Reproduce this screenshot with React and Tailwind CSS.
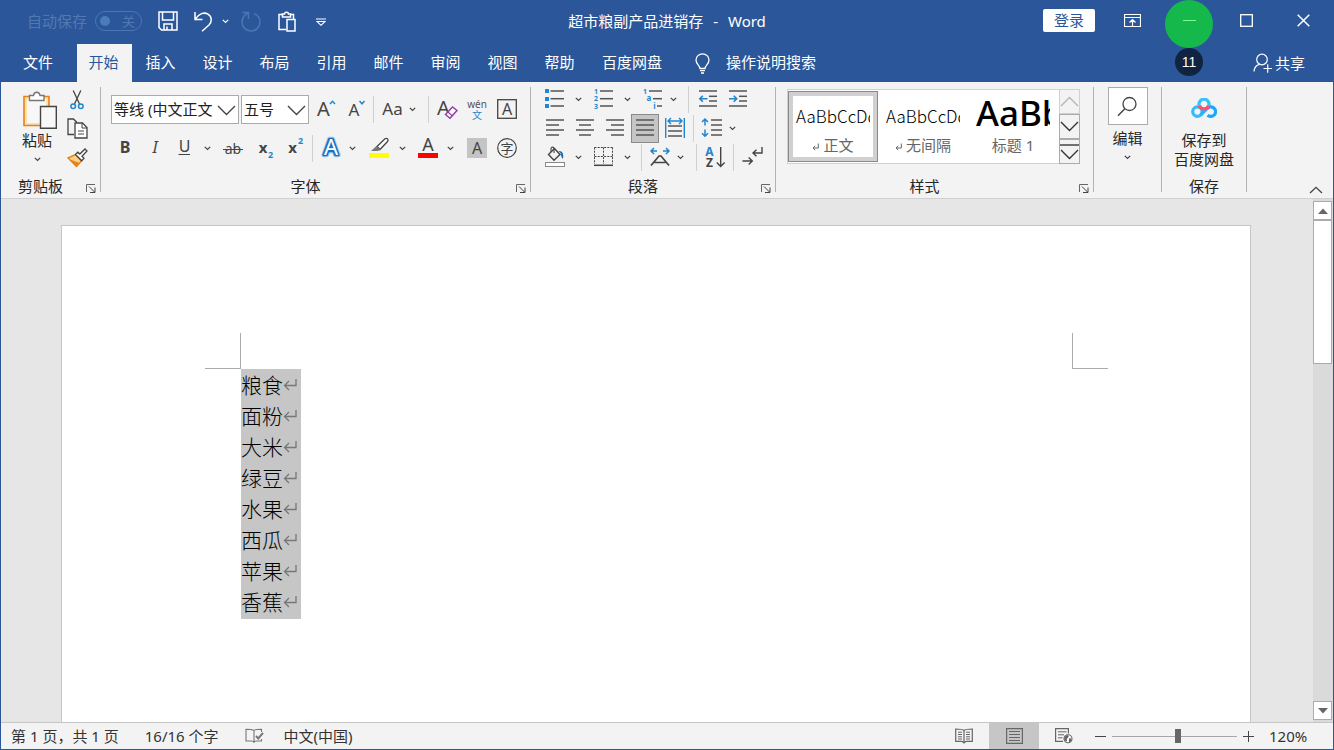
import React from "react";

const BLUE = "#1f86cf";
const INK = "#444444";

/* ---------- shared pieces ---------- */

function Icon({ w = 30, h = 29, children, className = "" }) {
  return (
    <svg
      width={w}
      height={h}
      viewBox={`0 0 ${w} ${h}`}
      fill="none"
      aria-hidden="true"
      className={`shrink-0 ${className}`}
    >
      {children}
    </svg>
  );
}

function Tool({ label, className = "", children }) {
  return (
    <button type="button" aria-label={label} title={label} className={`flex h-[29px] shrink-0 items-center justify-center ${className}`}>
      {children}
    </button>
  );
}

function Chevron({ label, className = "" }) {
  return (
    <Tool label={label} className={`w-[14px] ${className}`}>
      <Icon w={7} h={5}>
        <path d="M.8 .8 3.5 3.5 6.2 .8" stroke={INK} strokeWidth="1.2" />
      </Icon>
    </Tool>
  );
}

function Sep({ className = "" }) {
  return <div className={`h-[27px] w-px shrink-0 bg-[#d0d0d0] ${className}`} />;
}

function Divider() {
  return <div className="mt-[5px] mb-[6px] w-px shrink-0 bg-[#b4b4b4]" />;
}

function Group({ label, launcher = true, className = "", children }) {
  return (
    <section aria-label={label} className={`flex shrink-0 flex-col justify-between pb-0.5 ${className}`}>
      {children}
      <div className="flex h-5 items-center leading-5">
        <span className="flex-1 text-center">{label}</span>
        {launcher && (
          <button type="button" aria-label={`${label}设置`} className="flex w-5 justify-center pt-1 pl-0.5">
            <Icon w={10} h={9}>
              <path d="M.5 8V.5H9" stroke="#666" />
              <path d="M3 2.5 8.5 8M9 3.5V8.5H4" stroke="#444" />
            </Icon>
          </button>
        )}
      </div>
    </section>
  );
}

function Lines({ rows }) {
  return rows.map(([x1, x2, y], i) => (
    <path key={i} d={`M${x1} ${y}H${x2}`} stroke="#555" strokeWidth="1.5" />
  ));
}

function Glyph({ x, y, size, fill = INK, bold, italic, anchor = "middle", children }) {
  return (
    <text x={x} y={y} fontSize={size} fill={fill} fontWeight={bold ? 700 : 400} fontStyle={italic ? "italic" : "normal"} textAnchor={anchor}>
      {children}
    </text>
  );
}

/* ---------- title bar ---------- */

function TitleBar() {
  return (
    <header className="grid h-11 shrink-0 grid-cols-[1fr_auto_1fr] text-white">
      <div className="flex h-[42px] items-center pl-[26px]">
        <label htmlFor="autosave" className="text-[#5079b3]">自动保存</label>
        <button
          id="autosave"
          type="button"
          role="switch"
          aria-checked="false"
          className="ml-2 flex h-5 w-[47px] items-center justify-between rounded-full border border-[#4a76b3] pr-[6px] pl-1 text-[13px] text-[#5079b3]"
        >
          <span className="h-[10px] w-[10px] rounded-full bg-[#4a7cbb]" />
          关
        </button>
        <button type="button" aria-label="保存" className="ml-4">
          <Icon w={20} h={20}>
            <path d="M1 1H19V19H3.5L1 16.5ZM4.5 1V9H15.5V1M6 19V13H14V19M9 15.5V19" stroke="#fff" strokeWidth="1.5" />
          </Icon>
        </button>
        <button type="button" aria-label="撤消" className="ml-[15px]">
          <Icon w={20} h={21}>
            <path d="M2 1V8.5H9.5M2.3 8.2C6 2.5 11 .8 15 3.2C19.3 6 19 11 16 14L9 20.3" stroke="#fff" strokeWidth="1.5" />
          </Icon>
        </button>
        <button type="button" aria-label="撤消列表" className="ml-[9px]">
          <Icon w={7} h={5}>
            <path d="M.8 .8 3.5 3.5 6.2 .8" stroke="#fff" strokeWidth="1.2" />
          </Icon>
        </button>
        <button type="button" aria-label="重复" className="ml-3">
          <Icon w={20} h={21}>
            <path d="M1.5 1.5H7.5V8M7.2 2C3 4 1 7.2 1 11A9 9 0 0 0 19 11C19 7 16.5 4 13 2.6" stroke="#4a76b3" strokeWidth="1.5" />
          </Icon>
        </button>
        <button type="button" aria-label="粘贴" className="ml-[17px]">
          <Icon w={18} h={21}>
            <path d="M8 18.5H1V3.5H4M13 3.5H15.5V8M4.5 6V3H6.5C6.5 .5 10.5 .5 10.5 3H12.5V6Z" stroke="#fff" strokeWidth="1.5" />
            <path d="M9 8.5H17V20H9Z" stroke="#fff" strokeWidth="1.5" />
          </Icon>
        </button>
        <button type="button" aria-label="自定义快速访问工具栏" className="ml-5 pt-0.5">
          <Icon w={10} h={8}>
            <path d="M0 1H10M1 3.5H9L5 7.3Z" stroke="#fff" strokeWidth="1.1" />
          </Icon>
        </button>
      </div>
      <h1 className="flex h-[42px] items-center gap-[10px]">
        <span>超市粮副产品进销存</span>
        <span>-</span>
        <span>Word</span>
      </h1>
      <div className="flex h-10 items-center justify-end pr-px">
        <button type="button" className="mr-[9px] h-[23px] w-[52px] rounded-xs bg-white text-[#2b579a]">登录</button>
        <button type="button" aria-label="功能区显示选项" className="flex w-[57px] justify-center">
          <Icon w={17} h={13}>
            <path d="M.5 .5H16.5V12.5H.5ZM.5 3.5H16.5M8.5 12V6M5.5 8.5 8.5 5.5 11.5 8.5" stroke="#fff" strokeWidth="1.2" />
          </Icon>
        </button>
        <button type="button" aria-label="最小化" className="relative flex h-10 w-[57px] items-center justify-center">
          <span className="absolute top-0 left-1 h-12 w-12 rounded-full bg-[#14b84b]" />
          <span className="relative h-px w-[13px] bg-[#7dff8c]" />
          <span className="absolute top-12 left-[14px] flex h-7 w-7 items-center justify-center rounded-full bg-[#12233f] font-[Liberation_Sans] text-sm">11</span>
        </button>
        <button type="button" aria-label="最大化" className="flex w-[57px] justify-center">
          <Icon w={13} h={13}>
            <rect x=".7" y=".7" width="11.6" height="11.6" stroke="#fff" strokeWidth="1.3" />
          </Icon>
        </button>
        <button type="button" aria-label="关闭" className="flex w-[57px] justify-center">
          <Icon w={13} h={13}>
            <path d="M.7 .7 12.3 12.3M12.3 .7 .7 12.3" stroke="#fff" strokeWidth="1.5" />
          </Icon>
        </button>
      </div>
    </header>
  );
}

const TABS = ["插入", "设计", "布局", "引用", "邮件", "审阅", "视图", "帮助"];

function TabBar() {
  return (
    <nav className="flex h-[38px] shrink-0 items-stretch text-white">
      <button type="button" className="w-[76px] pr-0.5 pb-0.5">文件</button>
      <button type="button" aria-current="true" className="w-[55px] bg-[#f3f3f3] pr-0.5 pb-0.5 text-[#2b579a]">开始</button>
      {TABS.map((t) => (
        <button key={t} type="button" className="w-[57px] pb-0.5">{t}</button>
      ))}
      <button type="button" className="w-[88px] pb-0.5">百度网盘</button>
      <label htmlFor="tellme" className="ml-[19px] flex items-center">
        <Icon w={15} h={21}>
          <path d="M5 15.5C5 12.5 1 11.5 1 7A6.5 6.2 0 0 1 14 7C14 11.5 10 12.5 10 15.5ZM5 17.7H10M6 20H9" stroke="#fff" strokeWidth="1.3" />
        </Icon>
      </label>
      <input id="tellme" type="text" aria-label="操作说明搜索" placeholder="操作说明搜索" className="ml-4 w-[120px] bg-transparent pb-0.5 outline-none placeholder:text-white" />
      <button type="button" className="mr-7 ml-auto flex items-center gap-0.5">
        <Icon w={20} h={20}>
          <circle cx="9" cy="6.5" r="5.3" stroke="#fff" strokeWidth="1.2" />
          <path d="M1 18.5C1.3 14.5 3.5 12 6.5 11.3M10.5 15.5H19M14.7 11.3V19.7" stroke="#fff" strokeWidth="1.2" />
        </Icon>
        共享
      </button>
    </nav>
  );
}

/* ---------- ribbon ---------- */

function ClipboardGroup() {
  return (
    <Group label="剪贴板" className="w-[99px]">
      <div className="flex pt-[3px] pl-[9px]">
        <button type="button" className="flex w-[54px] flex-col items-center pt-[6px]">
          <Icon w={40} h={38}>
            <path d="M7 5.5H32V34.5H7Z" fill="#fbe3ae" stroke="#e8811a" strokeWidth="1.6" />
            <path d="M10 8H29V32H10Z" fill="#f7f7f7" />
            <path d="M12.5 9.5V4.5H16.5C17 .2 22.5 .2 23 4.5H27V9.5Z" fill="#fff" stroke="#777" strokeWidth="1.4" />
            <path d="M23.5 15.5H39.3V37.2H23.5Z" fill="#f7f7f7" stroke="#444" strokeWidth="1.4" />
          </Icon>
          <span className="leading-[22px]">粘贴</span>
          <Icon w={7} h={5} className="mt-[6px]">
            <path d="M.8 .8 3.5 3.5 6.2 .8" stroke={INK} strokeWidth="1.2" />
          </Icon>
        </button>
        <div className="flex w-[26px] flex-col">
          <Tool label="剪切">
            <Icon w={14} h={20}>
              <path d="M3.2 .5 9.5 14M10.8 .5 4.5 14" stroke="#444" strokeWidth="1.3" />
              <circle cx="3.2" cy="16.3" r="2.3" stroke={BLUE} strokeWidth="1.5" />
              <circle cx="10.8" cy="16.3" r="2.3" stroke={BLUE} strokeWidth="1.5" />
            </Icon>
          </Tool>
          <Tool label="复制">
            <Icon w={21} h={21}>
              <path d="M7 16.5H1V1H6.5L10 4.5" stroke="#444" strokeWidth="1.3" />
              <path d="M8 5H15.5L20 9.5V20H8Z" fill="#fff" stroke="#444" strokeWidth="1.3" />
              <path d="M15 5V10H20M11 13H17M11 16H17" stroke="#444" />
            </Icon>
          </Tool>
          <Tool label="格式刷">
            <Icon w={21} h={20}>
              <path d="M1 10 8.5 6.5 14.5 13 9.5 18.5Z" fill="#fbd48a" stroke="#e8811a" strokeWidth="1.4" />
              <path d="M3 11.5 12.5 15 9.5 18.5Z" fill="#e8811a" />
              <path d="M8.5 6.5 10.8 4.2 12.8 6 18 1 20 3 15 8.2 17 10.3 14.7 12.7Z" fill="#fff" stroke="#444" strokeWidth="1.3" />
            </Icon>
          </Tool>
        </div>
      </div>
    </Group>
  );
}

function Combo({ id, label, value, className }) {
  return (
    <div className={`relative ${className}`}>
      <select id={id} aria-label={label} className="h-[29px] w-full appearance-none overflow-hidden border border-[#ababab] bg-white pr-[25px] pb-0.5 pl-0.5 text-[#222] outline-none">
        <option>{value}</option>
      </select>
      <Icon w={19} h={11} className="pointer-events-none absolute top-[10px] right-[3px]">
        <path d="M1 1 9.5 9.5 18 1" stroke="#444" strokeWidth="1.4" />
      </Icon>
    </div>
  );
}

function FontGroup() {
  return (
    <Group label="字体" className="w-[429px]">
      <div className="flex flex-col gap-[10px] pt-[13px]">
        <div className="flex items-center pl-[10px]">
          <Combo id="font-name" label="字体名称" value="等线 (中文正文)" className="mr-0.5 w-[128px]" />
          <Combo id="font-size" label="字号" value="五号" className="mr-0.5 w-[68px]" />
          <Tool label="增大字号">
            <Icon>
              <Glyph x={12.5} y={20.5} size={20}>A</Glyph>
              <path d="M19 9 21.5 6.3 24 9" stroke={BLUE} strokeWidth="1.5" />
            </Icon>
          </Tool>
          <Tool label="减小字号">
            <Icon>
              <Glyph x={13} y={20.5} size={17}>A</Glyph>
              <path d="M18.5 6 21 8.8 23.5 6" stroke={BLUE} strokeWidth="1.5" />
            </Icon>
          </Tool>
          <Sep className="ml-0.5" />
          <Tool label="更改大小写" className="ml-1">
            <Icon>
              <Glyph x={14.5} y={20} size={17}>Aa</Glyph>
            </Icon>
          </Tool>
          <Chevron label="更改大小写选项" className="-ml-[3px]" />
          <Sep className="ml-[9px]" />
          <Tool label="清除所有格式" className="ml-[3px]">
            <Icon>
              <Glyph x={11.5} y={20} size={20}>A</Glyph>
              <path d="M13.5 19.5 20.5 12 25 15.5 18 23.3Z" fill="#fff" stroke="#9440a8" strokeWidth="1.5" />
              <path d="M15.8 17 20.3 20.8" stroke="#9440a8" strokeWidth="1.3" />
            </Icon>
          </Tool>
          <Tool label="拼音指南" className="w-[30px]">
            <span className="flex flex-col items-center">
              <span className="text-[10px] leading-[11px] text-[#555]">wén</span>
              <span className="text-[10px] leading-[11px] text-[#1f86cf]">文</span>
            </span>
          </Tool>
          <Tool label="字符边框">
            <Icon>
              <rect x="5.7" y="4.7" width="18.6" height="18.6" stroke="#444" strokeWidth="1.3" />
              <Glyph x={15} y={20} size={16}>A</Glyph>
            </Icon>
          </Tool>
        </div>
        <div className="flex items-center pl-[9px]">
          <Tool label="加粗">
            <Icon><Glyph x={15} y={18.5} size={16} bold>B</Glyph></Icon>
          </Tool>
          <Tool label="倾斜">
            <Icon><Glyph x={15} y={18.5} size={16} italic>I</Glyph></Icon>
          </Tool>
          <Tool label="下划线">
            <Icon>
              <Glyph x={14.5} y={18} size={16}>U</Glyph>
              <path d="M8.5 20.5H20" stroke={INK} />
            </Icon>
          </Tool>
          <Chevron label="下划线选项" />
          <Tool label="删除线" className="ml-1">
            <Icon>
              <Glyph x={15} y={19.5} size={14}>ab</Glyph>
              <path d="M5 15.5H25" stroke={INK} />
            </Icon>
          </Tool>
          <Tool label="下标" className="ml-0.5">
            <Icon>
              <Glyph x={13} y={18.5} size={15} bold>x</Glyph>
              <Glyph x={20.5} y={23.5} size={9} bold fill={BLUE}>2</Glyph>
            </Icon>
          </Tool>
          <Tool label="上标">
            <Icon>
              <Glyph x={12.5} y={18.5} size={15} bold>x</Glyph>
              <Glyph x={20.5} y={10} size={9} bold fill={BLUE}>2</Glyph>
            </Icon>
          </Tool>
          <Sep className="ml-0.5" />
          <Tool label="文本效果" className="ml-1">
            <Icon w={28}>
              <g strokeLinejoin="round">
                <text x="14" y="21" fontSize="22" fontWeight="600" textAnchor="middle" fill="#a8cfee" stroke="#a8cfee" strokeWidth="4.5">A</text>
                <text x="14" y="21" fontSize="22" fontWeight="600" textAnchor="middle" fill="#1a6fc4" stroke="#1a6fc4" strokeWidth="2.5">A</text>
                <text x="14" y="21" fontSize="22" fontWeight="400" textAnchor="middle" fill="#fff">A</text>
              </g>
            </Icon>
          </Tool>
          <Chevron label="文本效果选项" />
          <Tool label="文本突出显示颜色" className="ml-[6px]">
            <Icon>
              <path d="M12 12.5 20 4.8C22 3.5 24 5.5 22.5 7.5L15 15.5Z" fill="#fff" stroke="#444" strokeWidth="1.3" />
              <path d="M6 17 11.5 12 15.5 15.8 13 17Z" fill="#777" />
              <rect x="4" y="19" width="20" height="5" fill="#ffff00" />
            </Icon>
          </Tool>
          <Chevron label="突出显示颜色选项" />
          <Tool label="字体颜色" className="ml-1">
            <Icon>
              <Glyph x={15} y={17} size={18}>A</Glyph>
              <rect x="5" y="19" width="20" height="5" fill="#ff0000" />
            </Icon>
          </Tool>
          <Chevron label="字体颜色选项" />
          <Tool label="字符底纹" className="ml-[5px]">
            <Icon>
              <rect x="5" y="4" width="20" height="20" fill="#c4c4c4" />
              <Glyph x={15} y={20} size={16}>A</Glyph>
            </Icon>
          </Tool>
          <Tool label="带圈字符">
            <Icon>
              <circle cx="15" cy="14" r="9.3" stroke="#444" strokeWidth="1.2" />
              <Glyph x={15} y={19} size={13}>字</Glyph>
            </Icon>
          </Tool>
        </div>
      </div>
    </Group>
  );
}

function ParagraphGroup() {
  return (
    <Group label="段落" className="w-[244px]">
      <div className="flex flex-col pt-[3px] pl-[9px]">
        <div className="flex items-center">
          <Tool label="项目符号">
            <Icon>
              <path d="M5 4H9V8H5ZM5 12H9V16H5ZM5 19H9V23H5Z" fill={BLUE} />
              <Lines rows={[[10.5, 24, 6], [10.5, 24, 13.7], [10.5, 24, 21]]} />
            </Icon>
          </Tool>
          <Chevron label="项目符号选项" className="ml-px" />
          <Tool label="编号" className="ml-[3px]">
            <Icon>
              <Glyph x={8} y={8.5} size={7} bold fill={BLUE}>1</Glyph>
              <Glyph x={8} y={16} size={7} bold fill={BLUE}>2</Glyph>
              <Glyph x={8} y={23.7} size={7} bold fill={BLUE}>3</Glyph>
              <Lines rows={[[12, 25, 6], [12, 25, 13.7], [12, 25, 21]]} />
            </Icon>
          </Tool>
          <Chevron label="编号选项" className="ml-0.5" />
          <Tool label="多级列表" className="ml-1">
            <Icon>
              <Glyph x={7} y={8.5} size={7} bold fill={BLUE}>1</Glyph>
              <Glyph x={11} y={16} size={8} bold fill={BLUE}>a</Glyph>
              <Glyph x={16.5} y={23.7} size={8} bold fill={BLUE}>i</Glyph>
              <Lines rows={[[11, 24, 6], [15, 24, 13.7], [19, 24, 21]]} />
            </Icon>
          </Tool>
          <Chevron label="多级列表选项" className="-ml-0.5" />
          <Sep className="ml-2" />
          <Tool label="减少缩进量" className="ml-1">
            <Icon>
              <Lines rows={[[6, 24, 6], [16, 24, 11.3], [16, 24, 16], [6, 24, 21]]} />
              <path d="M14.5 13.7H7M9.8 10.7 6.8 13.7 9.8 16.7" stroke={BLUE} strokeWidth="1.6" />
            </Icon>
          </Tool>
          <Tool label="增加缩进量">
            <Icon>
              <Lines rows={[[6, 24, 6], [16, 24, 11.3], [16, 24, 16], [6, 24, 21]]} />
              <path d="M6 13.7H13.5M10.7 10.7 13.7 13.7 10.7 16.7" stroke={BLUE} strokeWidth="1.6" />
            </Icon>
          </Tool>
        </div>
        <div className="flex items-center">
          <Tool label="左对齐">
            <Icon><Lines rows={[[6, 24, 6], [6, 19, 11], [6, 24, 16], [6, 19, 21]]} /></Icon>
          </Tool>
          <Tool label="居中">
            <Icon><Lines rows={[[6, 24, 6], [9, 21, 11], [6, 24, 16], [9, 21, 21]]} /></Icon>
          </Tool>
          <Tool label="右对齐">
            <Icon><Lines rows={[[6, 24, 6], [11, 24, 11], [6, 24, 16], [11, 24, 21]]} /></Icon>
          </Tool>
          <Tool label="两端对齐" className="mx-px w-7 border border-[#8a8a8a] bg-[#c5c5c5]">
            <Icon w={26} h={27}><Lines rows={[[4, 22, 5], [4, 22, 10], [4, 22, 15], [4, 22, 20]]} /></Icon>
          </Tool>
          <Tool label="分散对齐">
            <Icon>
              <path d="M5.7 4V24M24.3 4V24M8 7H22M11 4 8 7 11 10M19 4 22 7 19 10" stroke={BLUE} strokeWidth="1.4" />
              <Lines rows={[[8, 22, 12], [8, 22, 17], [8, 22, 22]]} />
            </Icon>
          </Tool>
          <Sep className="ml-[3px]" />
          <Tool label="行和段落间距" className="ml-[3px]">
            <Icon>
              <Lines rows={[[14, 25, 6], [14, 25, 11], [14, 25, 16], [14, 25, 21]]} />
              <path d="M8 11.5V5M5 8 8 5 11 8M8 15.5V22M5 19.3 8 22.3 11 19.3" stroke={BLUE} strokeWidth="1.5" />
            </Icon>
          </Tool>
          <Chevron label="行距选项" className="-ml-0.5" />
        </div>
        <div className="flex items-center">
          <Tool label="底纹">
            <Icon>
              <rect x="5.5" y="19.5" width="19" height="4" fill="#fff" stroke="#888" />
              <path d="M8.5 11.5 14.5 5.5 20 11.5 14 17.3Z" stroke="#444" strokeWidth="1.4" />
              <path d="M11 9V6C11 3.5 14 3.5 14 6V10" stroke="#444" strokeWidth="1.1" />
              <path d="M18.5 8C22.5 7.5 24 11 23 16C21.5 14.5 20.5 12 20.8 10.5Z" fill="#1a6fb4" />
            </Icon>
          </Tool>
          <Chevron label="底纹选项" className="ml-px" />
          <Tool label="边框" className="ml-[3px]">
            <Icon>
              <path d="M6.5 4.5H24.5M6.5 13.5H24.5M6.5 4.5V21M15.5 4.5V21M24.5 4.5V21" stroke="#444" strokeDasharray="2 1.2" />
              <path d="M6 22.3H25" stroke="#444" strokeWidth="1.5" />
            </Icon>
          </Tool>
          <Chevron label="边框选项" className="ml-0.5" />
          <Sep className="ml-[7px]" />
          <Tool label="中文版式" className="ml-[3px]">
            <Icon>
              <path d="M12 8H6.5M9 5 6 8 9 11M18 8H23.5M21 5 24 8 21 11" stroke={BLUE} strokeWidth="1.5" />
              <path d="M6 22.5 14 13H16L24 22.5M9.5 19.5H20.5" stroke="#444" strokeWidth="1.7" />
            </Icon>
          </Tool>
          <Chevron label="中文版式选项" className="-ml-0.5" />
          <Sep className="ml-[9px]" />
          <Tool label="排序" className="ml-0.5">
            <Icon>
              <Glyph x={10.5} y={12.5} size={12} bold fill={BLUE}>A</Glyph>
              <Glyph x={10.5} y={24} size={12} bold>Z</Glyph>
              <path d="M21.7 4V23.3M17.8 19.5 21.7 23.5 25.6 19.5" stroke="#444" strokeWidth="1.4" />
            </Icon>
          </Tool>
          <Sep className="ml-1" />
          <Tool label="显示编辑标记" className="ml-1">
            <Icon>
              <path d="M24 4V10H15.5M18.5 6.7 15 10 18.5 13.3M4.5 18H14M10.7 14.5 14.3 18 10.7 21.5" stroke="#444" strokeWidth="1.4" />
            </Icon>
          </Tool>
        </div>
      </div>
    </Group>
  );
}

function StyleName({ mark, children }) {
  return (
    <span className="flex items-center justify-center gap-1 leading-5 text-[#666]">
      {mark && (
        <Icon w={7} h={8} className="mt-1">
          <path d="M6.3 .5V5H1M3.2 2.8 1 5 3.2 7.2" stroke="#666" />
        </Icon>
      )}
      {children}
    </span>
  );
}

function BodyPreview() {
  return (
    <span className="w-full overflow-hidden text-left font-['Noto_Sans_CJK_SC'] text-[17px] leading-[38px] font-light whitespace-nowrap text-black">
      AaBbCcDdE
    </span>
  );
}

function StylesGroup() {
  return (
    <Group label="样式" className="w-[317px]">
      <div className="pt-[7px] pl-[11px]">
        <div className="flex h-[75px] w-[293px] border border-[#d0d0d0] bg-white">
          <button type="button" aria-pressed="true" className="my-px flex w-[90px] flex-col justify-end border border-[#8a8a8a] bg-[#d2d0ce] p-1">
            <span className="flex w-full flex-1 flex-col justify-end bg-white px-[3px] pb-0.5">
              <BodyPreview />
              <StyleName mark>正文</StyleName>
            </span>
          </button>
          <button type="button" className="flex w-[90px] flex-col justify-end px-2 pb-2">
            <BodyPreview />
            <span className="w-full"><StyleName mark>无间隔</StyleName></span>
          </button>
          <button type="button" className="flex w-[90px] flex-col justify-end px-2 pb-2">
            <span className="w-full overflow-hidden text-left text-[35px] leading-[44px] font-medium whitespace-nowrap text-black">AaBb</span>
            <span className="w-full"><StyleName>标题 1</StyleName></span>
          </button>
          <div className="-my-px -mr-px ml-auto flex w-[21px] flex-col">
            <button type="button" aria-label="上一行" className="flex flex-1 items-center justify-center border border-[#d0d0d0] bg-[#f3f3f3]">
              <Icon w={19} h={11}><path d="M1 10 9.5 1.5 18 10" stroke="#b4b4b4" strokeWidth="1.3" /></Icon>
            </button>
            <button type="button" aria-label="下一行" className="flex flex-1 items-center justify-center border border-[#ababab] bg-[#f3f3f3]">
              <Icon w={19} h={11}><path d="M1 1 9.5 9.5 18 1" stroke="#333" strokeWidth="1.4" /></Icon>
            </button>
            <button type="button" aria-label="更多样式" className="flex flex-1 items-center justify-center border border-[#ababab] bg-[#f3f3f3]">
              <Icon w={19} h={19}><path d="M0 3H19" stroke="#444" strokeWidth="1.5" /><path d="M1 8 9.5 16.5 18 8" stroke="#333" strokeWidth="1.4" /></Icon>
            </button>
          </div>
        </div>
      </div>
    </Group>
  );
}

function Ribbon() {
  return (
    <div className="flex h-[117px] shrink-0 border-b border-[#d0d0d0] bg-[#f3f3f3] text-[#262626]">
      <ClipboardGroup />
      <Divider />
      <FontGroup />
      <Divider />
      <ParagraphGroup />
      <Divider />
      <StylesGroup />
      <Divider />
      <button type="button" className="flex w-[67px] shrink-0 flex-col items-center pt-[5px]">
        <span className="flex h-[38px] w-10 items-center justify-center border border-[#ababab] bg-white">
          <Icon w={21} h={21}>
            <circle cx="12.5" cy="8" r="6.5" stroke="#444" strokeWidth="1.3" />
            <path d="M7.8 12.7 1 19.7" stroke="#444" strokeWidth="1.5" />
          </Icon>
        </span>
        <span className="mt-0.5 leading-[22px]">编辑</span>
        <Icon w={7} h={5} className="mt-[6px]">
          <path d="M.8 .8 3.5 3.5 6.2 .8" stroke={INK} strokeWidth="1.2" />
        </Icon>
      </button>
      <Divider />
      <Group label="保存" launcher={false} className="w-[84px]">
        <button type="button" className="flex flex-col items-center pt-4 leading-[19px]">
          <Icon w={26} h={20}>
            <path d="M8.2 7.6A5 5 0 1 1 17.8 7.6" stroke="#35c2fb" strokeWidth="3.2" />
            <path d="M16 10.7A4.8 4.8 0 1 1 16.6 17.2" stroke="#1ba7fa" strokeWidth="3.2" />
            <circle cx="6.4" cy="13.6" r="4.7" stroke="#30bdfb" strokeWidth="3.2" />
            <path d="M9.6 17.2 16.2 10.4" stroke="#27b3fb" strokeWidth="3.2" />
            <path d="M8.4 7.4A4.8 4.8 0 0 0 17.6 7.4" stroke="#fb5273" strokeWidth="3.4" />
          </Icon>
          <span className="mt-[13px]">保存到</span>
          <span>百度网盘</span>
        </button>
      </Group>
      <Divider />
      <button type="button" aria-label="折叠功能区" className="mt-auto mr-[10px] mb-1 ml-auto">
        <Icon w={14} h={8}><path d="M1 7 7 1.3 13 7" stroke="#444" strokeWidth="1.3" /></Icon>
      </button>
    </div>
  );
}

/* ---------- document ---------- */

const PARAGRAPHS = ["粮食", "面粉", "大米", "绿豆", "水果", "西瓜", "苹果", "香蕉"];

function DocumentArea() {
  return (
    <div className="flex min-h-0 flex-1 bg-[#e6e6e6]">
      <main className="flex min-w-0 flex-1 overflow-hidden pt-[26px] pr-[62px] pl-[60px]">
        <article className="flex-1 border border-b-0 border-[#c6c6c6] bg-white pt-[107px] pr-[142px] pl-[143px]">
          <div className="flex justify-between">
            <div className="h-9 w-9 border-r border-b border-[#ababab]" />
            <div className="h-9 w-9 border-b border-l border-[#ababab]" />
          </div>
          <div className="ml-9 w-[60px] bg-[#c6c6c6] pb-0.5 text-[21px] leading-[31px] text-black">
            {PARAGRAPHS.map((p) => (
              <p key={p} className="flex h-[31px] items-center font-['Noto_Sans_CJK_SC'] font-light">
                {p}
                <Icon w={14} h={13}>
                  <path d="M13 1V7.5H1.5M6 3 1.5 7.5 6 12" stroke="#777" strokeWidth="1.3" />
                </Icon>
              </p>
            ))}
          </div>
        </article>
      </main>
      <div className="flex w-5 shrink-0 flex-col bg-[#dadada] py-0.5 pr-px">
        <button type="button" aria-label="向上滚动" className="flex h-[19px] items-center justify-center border border-[#ababab] bg-white">
          <Icon w={10} h={6}><path d="M0 6 5 .5 10 6Z" fill="#666" /></Icon>
        </button>
        <div className="h-36 border border-[#ababab] bg-white" />
        <button type="button" aria-label="向下滚动" className="mt-auto flex h-[19px] items-center justify-center border border-[#ababab] bg-white">
          <Icon w={10} h={6}><path d="M0 0 5 5.5 10 0Z" fill="#666" /></Icon>
        </button>
      </div>
    </div>
  );
}

/* ---------- status bar ---------- */

function StatusBar() {
  return (
    <footer className="flex h-[27px] shrink-0 items-stretch border-t border-[#c6c6c6] bg-[#f3f3f3] text-[#333]">
      <button type="button" className="ml-[10px]">第 1 页，共 1 页</button>
      <button type="button" className="ml-[26px]">16/16 个字</button>
      <button type="button" aria-label="校对" className="ml-[26px] flex items-center">
        <Icon w={19} h={16}>
          <path d="M9 2.5C7 1.3 4 1.3 1 1.3V13H6C7.5 13 9 13.5 9 14.8V2.5C10.5 1.3 13.5 1.3 16.5 1.3V4M9 14.8C9 13.5 10.5 13 11.5 13H16.5V11" stroke="#777" strokeWidth="1.1" />
          <path d="M11 8 13.3 10.5 18 4.8" stroke="#777" strokeWidth="2" />
        </Icon>
      </button>
      <button type="button" className="ml-5">中文(中国)</button>
      <button type="button" aria-label="阅读视图" className="ml-auto flex w-[50px] items-center justify-center">
        <Icon w={18} h={16}>
          <path d="M9 2.5C7.5 1 5 1 .7 1V13.3H7L9 15 11 13.3H17.3V1C13 1 10.5 1 9 2.5V15" stroke="#666" strokeWidth="1.2" />
          <path d="M3 4.2H7M3 6.5H7M3 8.8H7M3 11H7M11 4.2H15M11 6.5H15M11 8.8H15M11 11H15" stroke="#666" />
        </Icon>
      </button>
      <button type="button" aria-label="页面视图" aria-pressed="true" className="flex w-[50px] items-center justify-center bg-[#c6c6c6]">
        <Icon w={17} h={16}>
          <path d="M.6 .6H16.4V15.4H.6Z" stroke="#666" strokeWidth="1.2" />
          <path d="M3 3.5H14M3 6.5H14M3 9.5H14M3 12.5H14" stroke="#666" />
        </Icon>
      </button>
      <button type="button" aria-label="Web 版式视图" className="flex w-[50px] items-center justify-center">
        <Icon w={18} h={16}>
          <path d="M8 13.3H.6V.6H13.4V5.5" stroke="#666" strokeWidth="1.2" />
          <path d="M3 3.8H11.5M3 6.8H9M3 9.8H7.5" stroke="#666" />
          <circle cx="13" cy="10.8" r="4" fill="#fff" stroke="#666" strokeWidth="1.1" />
          <path d="M9.5 9C11 6.8 14.5 6.8 13.5 9C12.5 11 11.5 10 12 12.5C12.3 14 10.5 13.5 9.3 11.5ZM14 10.5C16 9.5 17 11 16.3 13L14 14.5Z" fill="#666" />
        </Icon>
      </button>
      <button type="button" aria-label="缩小" className="ml-1.5 flex items-center">
        <Icon w={11} h={11}><path d="M0 5.5H11" stroke="#444" /></Icon>
      </button>
      <input
        id="zoom"
        type="range"
        aria-label="显示比例"
        min="0"
        max="100"
        defaultValue="53"
        className="mx-[6px] w-[125px] appearance-none bg-transparent [&::-webkit-slider-runnable-track]:h-px [&::-webkit-slider-runnable-track]:bg-[#a6a6a6] [&::-webkit-slider-thumb]:-mt-[7px] [&::-webkit-slider-thumb]:h-[14px] [&::-webkit-slider-thumb]:w-[6px] [&::-webkit-slider-thumb]:appearance-none [&::-webkit-slider-thumb]:bg-[#666]"
      />
      <button type="button" aria-label="放大" className="flex items-center">
        <Icon w={11} h={11}><path d="M0 5.5H11M5.5 0V11" stroke="#444" /></Icon>
      </button>
      <button type="button" className="mr-[23px] w-14 pl-[15px] text-left">120%</button>
    </footer>
  );
}

export default function App() {
  return (
    <div className="flex h-screen flex-col overflow-hidden border border-t-0 border-[#2b579a] bg-[#2b579a] font-['Noto_Sans','Noto_Sans_CJK_SC',sans-serif] text-[15px] leading-5">
      <TitleBar />
      <TabBar />
      <Ribbon />
      <DocumentArea />
      <StatusBar />
    </div>
  );
}
